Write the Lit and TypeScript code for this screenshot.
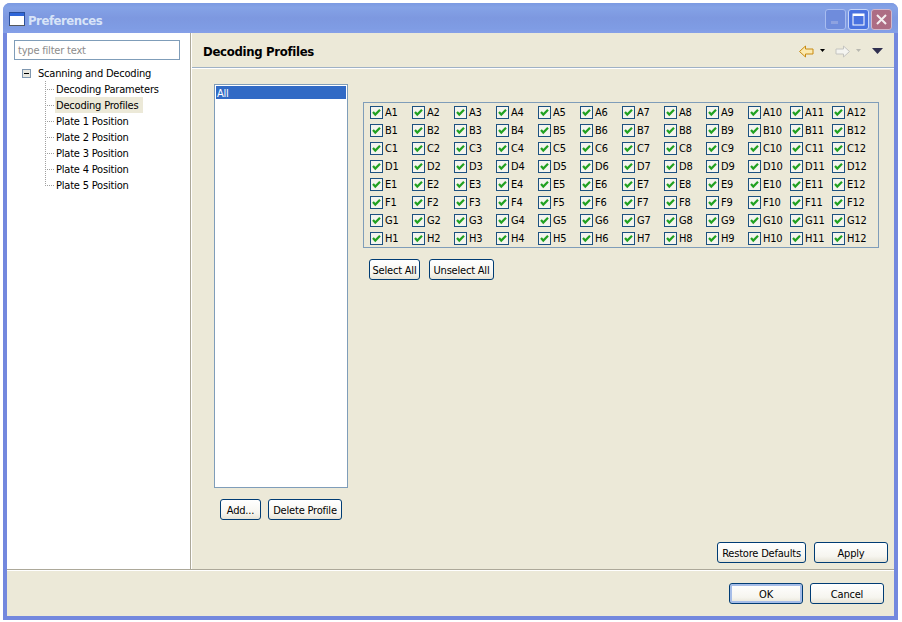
import { LitElement, html, css, svg } from 'lit';
import { customElement } from 'lit/decorators.js';

const ROWS = ['A', 'B', 'C', 'D', 'E', 'F', 'G', 'H'];
const COLS = [1, 2, 3, 4, 5, 6, 7, 8, 9, 10, 11, 12];
const PAGES = [
  'Decoding Parameters',
  'Decoding Profiles',
  'Plate 1 Position',
  'Plate 2 Position',
  'Plate 3 Position',
  'Plate 4 Position',
  'Plate 5 Position',
];

const checkMark = svg`<path d="M3 6 L5.3 8.6 L10 3.8" fill="none" stroke="#21a121" stroke-width="2.2"/>`;

@customElement('app-root')
export class AppRoot extends LitElement {
  static styles = css`
    :host {
      display: block;
      width: 902px;
      height: 622px;
      background: #fff;
      font-family: 'DejaVu Sans Condensed', 'DejaVu Sans', sans-serif;
      font-stretch: condensed;
      font-size: 11px;
      letter-spacing: -0.2px;
      color: #000;
      overflow: hidden;
    }

    .window {
      margin: 3px 0 0 3px;
      width: 895px;
      height: 617px;
      box-sizing: border-box;
      display: flex;
      flex-direction: column;
      padding: 0 4px 4px;
      border-radius: 7px 7px 0 0;
      background: #7388de;
    }

    /* Title bar */
    .titlebar {
      height: 30px;
      margin: 0 -4px;
      padding: 2px 6px 0 6px;
      box-sizing: border-box;
      flex: none;
      display: flex;
      align-items: center;
      border-radius: 7px 7px 0 0;
      background: linear-gradient(180deg, #7b9ae2 0%, #84a2e6 15%, #7d98e0 50%, #7f9ce4 85%, #86a0e8 100%);
    }
    .title {
      margin: 3px 0 0 3px;
      font-size: 13px;
      letter-spacing: -0.45px;
      font-weight: 700;
      color: #d8e4f8;
      flex: 1;
    }
    .caption {
      width: 21px;
      height: 21px;
      margin-left: 2px;
      box-sizing: border-box;
      display: flex;
      align-items: center;
      justify-content: center;
      border: 1px solid #a9bdf0;
      border-radius: 3px;
    }
    .caption.min { background: #6f8cdc; }
    .caption.max { background: #4a72e0; border-color: #c8d6f8; }
    .caption.close { background: #ad6d84; border-color: #d0b8cc; }

    .body {
      flex: 1;
      min-height: 0;
      display: flex;
      flex-direction: column;
      background: #ece9d8;
    }
    .main {
      flex: 1;
      min-height: 0;
      display: flex;
      border-bottom: 1px solid #aca899;
      box-shadow: 0 1px 0 #fff;
    }

    /* Left tree */
    .nav {
      width: 184px;
      flex: none;
      box-sizing: border-box;
      padding: 7px 10px 0 7px;
      background: #fff;
      border-right: 1px solid #aca899;
    }
    .filter {
      height: 20px;
      box-sizing: border-box;
      border: 1px solid #7f9db9;
      padding-left: 3px;
      line-height: 20px;
      color: #8c8c8c;
    }
    .root {
      margin: 5px 0 0 8px;
      height: 16px;
      display: flex;
      align-items: center;
      gap: 7px;
      line-height: 16px;
    }
    .root span {
      padding-top: 2px;
    }
    .tree {
      margin-left: 31px;
    }
    .leaf {
      height: 16px;
      display: flex;
      line-height: 18px;
    }
    .conn {
      width: 10px;
      flex: none;
      background:
        repeating-linear-gradient(180deg, #a0a0a0 0 1px, transparent 1px 2px) left top / 1px 100% no-repeat,
        repeating-linear-gradient(90deg, #a0a0a0 0 1px, transparent 1px 2px) left 8px / 100% 1px no-repeat;
    }
    .leaf:last-child .conn {
      background:
        repeating-linear-gradient(180deg, #a0a0a0 0 1px, transparent 1px 2px) left top / 1px 9px no-repeat,
        repeating-linear-gradient(90deg, #a0a0a0 0 1px, transparent 1px 2px) left 8px / 100% 1px no-repeat;
    }
    .label {
      padding: 0 5px 0 1px;
    }
    .leaf.sel .label {
      background: #ece9d8;
    }

    /* Right page */
    .page {
      flex: 1;
      min-width: 0;
      display: flex;
      flex-direction: column;
      border-left: 1px solid #fff;
    }
    .head {
      height: 35px;
      flex: none;
      display: flex;
      align-items: center;
      padding: 2px 11px 0 11px;
      box-sizing: border-box;
      border-bottom: 1px solid #9fb1c5;
      box-shadow: 0 1px 0 #fff;
    }
    .head h1 {
      flex: 1;
      margin: 0;
      font-size: 13px;
      letter-spacing: -0.3px;
      font-weight: 700;
    }
    .tools {
      display: flex;
      align-items: center;
    }
    .content {
      flex: 1;
      min-height: 0;
      display: flex;
      padding: 16px 10px 0 22px;
      gap: 15px;
    }
    .profiles {
      width: 134px;
      flex: none;
      display: flex;
      flex-direction: column;
    }
    .list {
      height: 404px;
      box-sizing: border-box;
      border: 1px solid #7f9db9;
      background: #fff;
      padding: 1px;
    }
    .list .item {
      height: 13px;
      line-height: 15px;
      padding-left: 1px;
      background: #316ac5;
      color: #fff;
    }
    .row {
      display: flex;
      gap: 7px;
    }
    .profiles .row {
      margin: 11px 0 0 6px;
    }
    .wells {
      flex: 1;
      min-width: 0;
      display: flex;
      flex-direction: column;
      padding-top: 18px;
    }
    .grid {
      width: 516px;
      height: 146px;
      box-sizing: border-box;
      border: 1px solid #7f9db9;
      display: grid;
      grid-template-columns: repeat(12, 42px);
      grid-auto-rows: 18px;
      padding: 0 0 0 5px;
      align-content: center;
    }
    .cell {
      display: flex;
      align-items: center;
      gap: 2px;
      line-height: 18px;
    }
    .cell span {
      padding-top: 1px;
    }
    .check {
      width: 13px;
      height: 13px;
      flex: none;
      display: block;
      margin-left: 1px;
    }
    .wells .row {
      margin: 11px 0 0 6px;
      gap: 9px;
    }
    .page-actions {
      display: flex;
      justify-content: flex-end;
      gap: 8px;
      padding: 0 6px 6px 0;
      margin-top: -27px;
    }
    .footer {
      height: 46px;
      flex: none;
      display: flex;
      justify-content: flex-end;
      gap: 7px;
      padding: 13px 10px 0 0;
      box-sizing: border-box;
    }

    button {
      height: 21px;
      box-sizing: border-box;
      padding: 2px 0 0;
      border: 1px solid #003c74;
      border-radius: 3px;
      background: linear-gradient(180deg, #fff 0%, #f6f5ef 70%, #e6e3d6 100%);
      font: inherit;
      letter-spacing: -0.2px;
      color: #000;
    }
    button.wide { width: 74px; }
    button.default {
      box-shadow: inset 0 0 0 2px #a6bde8;
    }
  `;

  private _cell(row: string, col: number) {
    return html`<div class="cell">
      <svg class="check" viewBox="0 0 13 13">
        <rect x="0.5" y="0.5" width="12" height="12" fill="#f4f4ee" stroke="#1c5180"/>
        ${checkMark}
      </svg>
      <span>${row}${col}</span>
    </div>`;
  }

  render() {
    return html`
      <div class="window">
        <div class="titlebar">
          <svg width="16" height="16" viewBox="0 0 16 16">
            <rect x="0.5" y="1.5" width="15" height="13" fill="#fff" stroke="#2a4f9c"/>
            <rect x="1" y="2" width="14" height="3" fill="#2f66d8"/>
            <rect x="0" y="14" width="16" height="1" fill="#55585c"/>
          </svg>
          <span class="title">Preferences</span>
          <div class="caption min">
            <svg width="11" height="11" viewBox="0 0 11 11"><rect x="1" y="7" width="7" height="3" fill="#8ea2e0"/></svg>
          </div>
          <div class="caption max">
            <svg width="13" height="13" viewBox="0 0 13 13">
              <rect x="1" y="1" width="11" height="11" fill="none" stroke="#fff" stroke-width="1"/>
              <rect x="1" y="1" width="11" height="2" fill="#fff"/>
            </svg>
          </div>
          <div class="caption close">
            <svg width="13" height="13" viewBox="0 0 13 13">
              <path d="M2 2 L11 11 M11 2 L2 11" stroke="#f4eef0" stroke-width="2" fill="none"/>
            </svg>
          </div>
        </div>

        <div class="body">
          <div class="main">
            <div class="nav">
              <div class="filter">type filter text</div>
              <div class="root">
                <svg width="9" height="9" viewBox="0 0 9 9">
                  <rect x="0.5" y="0.5" width="8" height="8" fill="#e8e8e0" stroke="#7f97b0"/>
                  <rect x="2" y="4" width="5" height="1" fill="#000"/>
                </svg>
                <span>Scanning and Decoding</span>
              </div>
              <div class="tree">
                ${PAGES.map(
                  (p) => html`<div class="leaf ${p === 'Decoding Profiles' ? 'sel' : ''}">
                    <span class="conn"></span><span class="label">${p}</span>
                  </div>`,
                )}
              </div>
            </div>

            <div class="page">
              <div class="head">
                <h1>Decoding Profiles</h1>
                <div class="tools">
                  <svg width="15" height="13" viewBox="0 0 15 13">
                    <path d="M0.5 6.5 L6.5 1 V4 H14 V9 H6.5 V12 Z" fill="#fbe9b0" stroke="#c88a10"/>
                  </svg>
                  <svg width="7" height="4" viewBox="0 0 7 4" style="margin:0 9px 0 5px"><path d="M1 0 H6 L3.5 3 Z" fill="#000"/></svg>
                  <svg width="15" height="13" viewBox="0 0 15 13">
                    <path d="M14.5 6.5 L8.5 1 V4 H1 V9 H8.5 V12 Z" fill="#f4f4f0" stroke="#c4c4c0"/>
                  </svg>
                  <svg width="7" height="4" viewBox="0 0 7 4" style="margin:0 10px 0 5px"><path d="M1 0 H6 L3.5 3 Z" fill="#b8b8b0"/></svg>
                  <svg width="11" height="6" viewBox="0 0 11 6"><path d="M0 0 H11 L5.5 6 Z" fill="#303050"/></svg>
                </div>
              </div>

              <div class="content">
                <div class="profiles">
                  <div class="list"><div class="item">All</div></div>
                  <div class="row">
                    <button style="width:41px">Add...</button>
                    <button style="width:74px">Delete Profile</button>
                  </div>
                </div>
                <div class="wells">
                  <div class="grid">
                    ${ROWS.map((r) => COLS.map((c) => this._cell(r, c)))}
                  </div>
                  <div class="row">
                    <button style="width:51px">Select All</button>
                    <button style="width:65px">Unselect All</button>
                  </div>
                </div>
              </div>

              <div class="page-actions">
                <button style="width:89px">Restore Defaults</button>
                <button class="wide">Apply</button>
              </div>
            </div>
          </div>
          <div class="footer">
            <button class="wide default">OK</button>
            <button class="wide">Cancel</button>
          </div>
        </div>
      </div>
    `;
  }
}
